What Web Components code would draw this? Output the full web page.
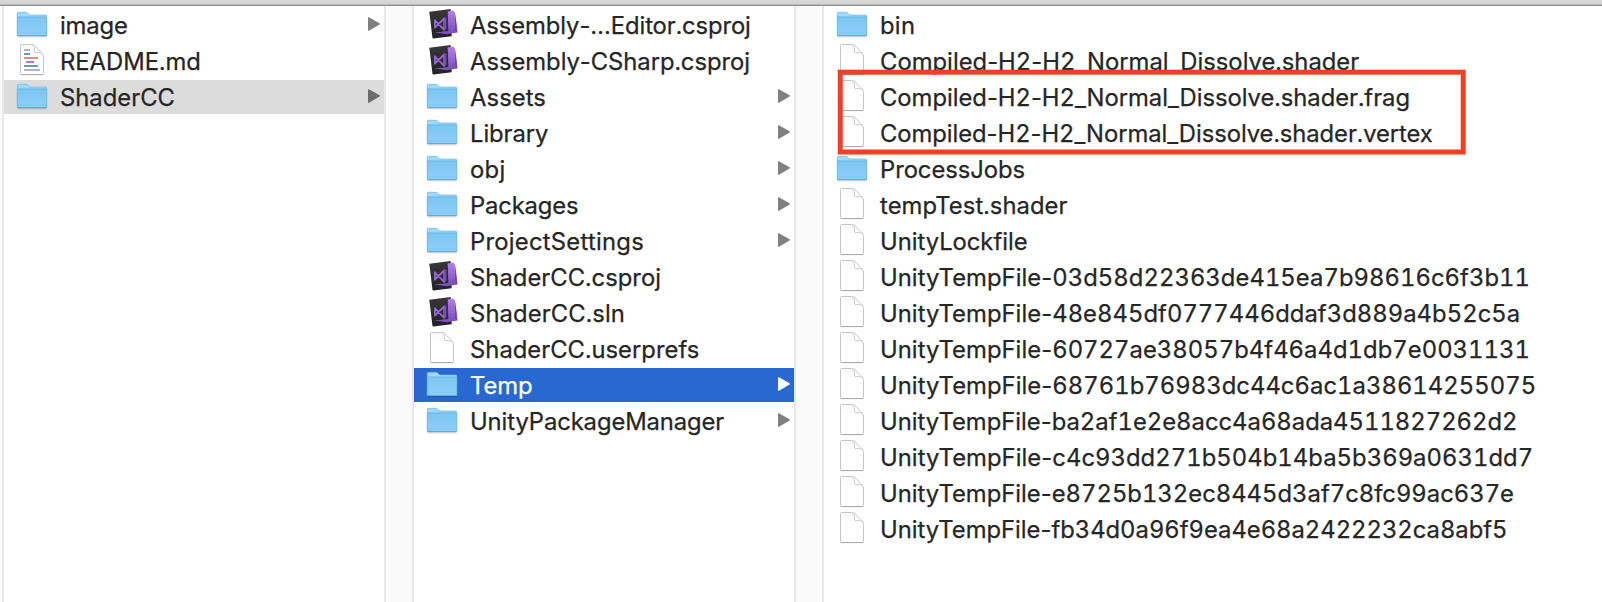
<!DOCTYPE html>
<html lang="en">
<head>
<meta charset="utf-8">
<title>Finder</title>
<style>
html,body{margin:0;height:100%;background:#fff;overflow:hidden}
body{font-family:Inter,"Liberation Sans",sans-serif}
</style>
</head>
<body>
<finder-window>
  <finder-column>
    <finder-item kind="folder" arrow extent="68.6">image</finder-item>
    <finder-item kind="code" extent="141.8">README.md</finder-item>
    <finder-item kind="folder" arrow state="parent" extent="116">ShaderCC</finder-item>
  </finder-column>
  <finder-column>
    <finder-item kind="vs" extent="281.800">Assembly-…Editor.csproj</finder-item>
    <finder-item kind="vs" extent="281">Assembly-CSharp.csproj</finder-item>
    <finder-item kind="folder" arrow extent="77">Assets</finder-item>
    <finder-item kind="folder" arrow extent="79.3">Library</finder-item>
    <finder-item kind="folder" arrow extent="36.5">obj</finder-item>
    <finder-item kind="folder" arrow extent="109.3">Packages</finder-item>
    <finder-item kind="folder" arrow extent="175">ProjectSettings</finder-item>
    <finder-item kind="vs" extent="192">ShaderCC.csproj</finder-item>
    <finder-item kind="vs" extent="156">ShaderCC.sln</finder-item>
    <finder-item kind="file" extent="230.3">ShaderCC.userprefs</finder-item>
    <finder-item kind="folder" arrow state="active" extent="63.5">Temp</finder-item>
    <finder-item kind="folder" arrow extent="255.2">UnityPackageManager</finder-item>
  </finder-column>
  <finder-column last>
    <finder-item kind="folder" extent="36.3">bin</finder-item>
    <finder-item kind="file" extent="480.2">Compiled-H2-H2_Normal_Dissolve.shader</finder-item>
    <finder-item kind="file" extent="531">Compiled-H2-H2_Normal_Dissolve.shader.frag</finder-item>
    <finder-item kind="file" extent="553.8">Compiled-H2-H2_Normal_Dissolve.shader.vertex</finder-item>
    <finder-item kind="folder" extent="146">ProcessJobs</finder-item>
    <finder-item kind="file" extent="188.6">tempTest.shader</finder-item>
    <finder-item kind="file" extent="148.5">UnityLockfile</finder-item>
    <finder-item kind="file" extent="651">UnityTempFile-03d58d22363de415ea7b98616c6f3b11</finder-item>
    <finder-item kind="file" extent="641.2">UnityTempFile-48e845df0777446ddaf3d889a4b52c5a</finder-item>
    <finder-item kind="file" extent="651">UnityTempFile-60727ae38057b4f46a4d1db7e0031131</finder-item>
    <finder-item kind="file" extent="657.2">UnityTempFile-68761b76983dc44c6ac1a38614255075</finder-item>
    <finder-item kind="file" extent="638.5">UnityTempFile-ba2af1e2e8acc4a68ada4511827262d2</finder-item>
    <finder-item kind="file" extent="654.2">UnityTempFile-c4c93dd271b504b14ba5b369a0631dd7</finder-item>
    <finder-item kind="file" extent="635">UnityTempFile-e8725b132ec8445d3af7c8fc99ac637e</finder-item>
    <finder-item kind="file" extent="628.5">UnityTempFile-fb34d0a96f9ea4e68a2422232ca8abf5</finder-item>
  </finder-column>
  <finder-highlight slot="overlay"></finder-highlight>
</finder-window>

<script>
const ICONS = {
  folder: `<svg viewBox="0 0 36 34"><defs>
    <linearGradient id="f" x1="0" y1="0" x2="0" y2="1"><stop offset="0" stop-color="#7cc5f3"/><stop offset="1" stop-color="#8fd0f8"/></linearGradient></defs>
    <path d="M3.6 28.7h28.8" stroke="#000" stroke-opacity=".16" stroke-width="1.4"/>
    <path d="M3.3 27.5V5.3q0-1 1-1H12q.8 0 1.300.4l1.900 1.900q.5.4 1.300.4h15.200q1 0 1 1v19.500z" fill="#a0d9fb" stroke="#6db4e0" stroke-width=".7"/>
    <path d="M3.200 9h29.600v18.200q0 .7-.7.7H3.900q-.7 0-.7-.7z" fill="url(#f)"/>
    <path d="M3.300 8.800h29.400" stroke="#68b2df" stroke-width=".8"/>
    <path d="M3.400 9v18.300M32.600 9v18.300" stroke="#6fb7e2" stroke-width=".7"/>
    <path d="M3.600 24.700h28.800" stroke="#7cc3ee" stroke-width=".6"/>
    <path d="M3.400 27.600h29.200" stroke="#5a9fcb" stroke-width=".9"/></svg>`,
  doc: extra => `<svg viewBox="0 0 36 34"><defs>
    <linearGradient id="d" x1="0" y1="0" x2="0" y2="1"><stop offset="0" stop-color="#f7f7f7"/><stop offset=".35" stop-color="#fff"/></linearGradient></defs>
    <path d="M6.500 1.500q0-1 1-1H17.600q1.800 0 3.200 1.200l6.600 6.400q2.100 2.100 2.100 4.700V29.600q0 .9-1 .9h-21q-1 0-1-.9z" fill="url(#d)" stroke="#c6c6c6" stroke-width="1"/>
    <path d="M18.200.7q2.300 1.300 2.300 4v3.200q0 .6.6.6h2.900q3.900 0 5.300 2.500" fill="#fff" stroke="#cecece" stroke-width="1"/>
    <path d="M6.800 30.600h22.400" stroke="#a9a9a9" stroke-width="1"/>${extra}</svg>`,
  vs: `<svg viewBox="0 0 36 34"><defs>
    <linearGradient id="v" x1="0" y1="0" x2="0" y2="1"><stop offset="0" stop-color="#b77de8"/><stop offset="1" stop-color="#7951b8"/></linearGradient>
    <linearGradient id="k" x1="0" y1="0" x2="0" y2="1"><stop offset="0" stop-color="#383639"/><stop offset="1" stop-color="#232124"/></linearGradient></defs>
    <path d="M5.300 3.700 26.700 1l1 27.200L9.300 30.400 8.500 30z" fill="url(#k)"/>
    <path d="M23.800 3.400 31 4.200l2.400 20.300-10.500 1.700-12.900-1.700 14.700-1.400z" fill="url(#v)"/>
    <path d="M23.800 3.400 29.900 2.500 31.300 23.600 25.600 24.500 24.500 22.800z" fill="url(#v)"/>
    <path d="M31.200 5.500l2.200 18-1.500.7-1-3z" fill="#7547ad"/>
    <path d="M10.900 12.300v7.200l9.300-9v11.400z" fill="none" stroke="#9567d3" stroke-width="1.800" stroke-linejoin="round"/>
    <path d="M20 9.200l2.400.8v11.200L20 22.600z" fill="#7850b5"/></svg>`
};
ICONS.file = ICONS.doc('');
ICONS.code = ICONS.doc(`<g stroke-width="2"><path d="M10 6h6M10 26h16" stroke="#b5b5b5"/><path d="M10 10h6M10 22h14" stroke="#60a1b0"/><path d="M10 14h14" stroke="#cf9291"/><path d="M12 18h8" stroke="#a17af3"/></g>`);

customElements.define('finder-window', class extends HTMLElement {
  constructor() {
    super();
    this.attachShadow({mode: 'open'}).innerHTML = `<style>
      :host{display:flex;flex-direction:column;height:100vh;position:relative;background:#fff}
      .bar{flex:none;height:6px;box-sizing:border-box;background:#d6d6d6;border-bottom:1px solid #929292;box-shadow:inset 0 -1px #b6b6b6}
      .columns{flex:1;min-height:0;display:flex;padding-left:2px;background:#fafafa}
    </style><div class="bar"></div><div class="columns"><slot></slot></div><slot name="overlay"></slot>`;
  }
});

customElements.define('finder-column', class extends HTMLElement {
  constructor() {
    super();
    this.attachShadow({mode: 'open'}).innerHTML = `<style>
      :host{display:flex;flex-direction:column;gap:2px;flex:none;box-sizing:border-box;width:384px;margin-right:26px;padding-top:2px;
        background:#fff;border:solid #e8e8e8;border-width:0 2px}
      :host([last]){flex:1;margin-right:0;border-right:0}
    </style><slot></slot>`;
  }
});

customElements.define('finder-item', class extends HTMLElement {
  constructor() {
    super();
    this.attachShadow({mode: 'open'});
  }
  connectedCallback() {
    this.shadowRoot.innerHTML = `<style>
      :host{display:flex;flex:none;height:34px;align-items:flex-start;color:#262626}
      :host([state=parent]){background:#dcdcdc;--arrow:#6c6c6c}
      :host([state=active]){background:#2a68d1;color:#fff;--arrow:#fff}
      .icon{flex:none;width:36px;height:34px;margin:0 10px 0 10px}
      .icon svg{display:block;width:36px;height:34px}
      .name{flex:none;white-space:nowrap;font-size:23.8px;line-height:34px;padding-top:1px;-webkit-text-stroke:.25px currentColor;font-feature-settings:"tnum","calt" 0}
      ::slotted(span){font-feature-settings:"tnum" 0,"calt" 0}
      .arrow{width:12px;height:14px;margin:9px 4px 0 auto;fill:var(--arrow,#808080)}
    </style>
    <div class="icon">${ICONS[this.getAttribute('kind')]}</div>
    <div class="name"><slot></slot></div>
    ${this.hasAttribute('arrow') ? '<svg class="arrow" viewBox="0 0 12 14"><path d="M0 .8Q0-.2 1 .3L11.500 6.300Q12.300 7 11.500 7.600L1 13.700Q0 14.200 0 13.200z"/></svg>' : ''}`;
    // Digits are tabular; hyphens keep their proportional width.
    this.innerHTML = this.textContent.replace(/-/g, '<span>-</span>');
    this.track();
  }
  // Adjusts tracking so the name spans its declared extent.
  track() {
    const name = this.shadowRoot.querySelector('.name');
    const extent = parseFloat(this.getAttribute('extent')) - 1;
    const count = [...this.textContent].length;
    name.style.letterSpacing = (extent - name.getBoundingClientRect().width) / count + 'px';
  }
});

customElements.define('finder-highlight', class extends HTMLElement {
  constructor() {
    super();
    this.attachShadow({mode: 'open'}).innerHTML = `<style>
      :host{display:block;position:absolute;left:837px;top:69px;width:630px;height:87px;pointer-events:none}
      svg{display:block;width:100%;height:100%}
    </style><svg viewBox="0 0 630 87" fill="none" stroke="#ee4023">
      <rect x="3.200" y="3.200" width="623" height="79.800" stroke-width="5.600" stroke-opacity=".5"/>
      <rect x="3.200" y="3.200" width="623" height="79.800" stroke-width="4.400"/></svg>`;
  }
});
</script>
</body>
</html>
